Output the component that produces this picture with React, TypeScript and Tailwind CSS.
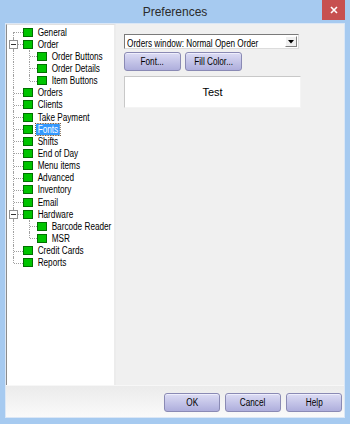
import React from "react";

type Node = {
  label: string;
  level: 0 | 1;
  expander?: boolean;
  first?: boolean;
  last?: boolean;
  lastChild?: boolean;
  selected?: boolean;
};

const nodes: Node[] = [
  { label: "General", level: 0, first: true },
  { label: "Order", level: 0, expander: true },
  { label: "Order Buttons", level: 1 },
  { label: "Order Details", level: 1 },
  { label: "Item Buttons", level: 1, lastChild: true },
  { label: "Orders", level: 0 },
  { label: "Clients", level: 0 },
  { label: "Take Payment", level: 0 },
  { label: "Fonts", level: 0, selected: true },
  { label: "Shifts", level: 0 },
  { label: "End of Day", level: 0 },
  { label: "Menu items", level: 0 },
  { label: "Advanced", level: 0 },
  { label: "Inventory", level: 0 },
  { label: "Email", level: 0 },
  { label: "Hardware", level: 0, expander: true },
  { label: "Barcode Reader", level: 1 },
  { label: "MSR", level: 1, lastChild: true },
  { label: "Credit Cards", level: 0 },
  { label: "Reports", level: 0, last: true },
];

// the dialog uses a condensed sans, approximated by squeezing Arial-width text
const squeeze = "inline-block scale-x-[0.82]";

// dotted connector lines for one row
const Connector = ({ node }: { node: Node }) => {
  const vTop = node.level === 0 && node.first ? "top-1/2" : "top-0";
  const vBottom = node.level === 0 && node.last ? "bottom-1/2" : "bottom-0";
  return (
    <>
      <div className="relative w-[16px] h-full shrink-0">
        <div className={`absolute left-[6px] ${vTop} ${vBottom} border-l border-dotted border-[#a0a0a0]`} />
        {node.level === 0 && (
          <div className="absolute left-[7px] right-0 top-1/2 border-t border-dotted border-[#a0a0a0]" />
        )}
        {node.expander && (
          <div className="absolute left-[2px] top-[2px] w-[9px] h-[9px] bg-white border border-[#919191] flex items-center justify-center">
            <div className="w-[5px] h-px bg-[#333]" />
          </div>
        )}
      </div>
      {node.level === 1 && (
        <div className="relative w-[14px] h-full shrink-0">
          <div
            className={`absolute left-[6px] top-0 ${node.lastChild ? "bottom-1/2" : "bottom-0"} border-l border-dotted border-[#a0a0a0]`}
          />
          <div className="absolute left-[7px] right-0 top-1/2 border-t border-dotted border-[#a0a0a0]" />
        </div>
      )}
    </>
  );
};

const TreeRow = ({ node }: { node: Node }) => (
  <div className="flex items-center h-[12.15px]">
    <Connector node={node} />
    <div className="w-[10px] h-[9px] shrink-0 bg-[#00c400] border border-[#007000]" />
    <span
      className={`${squeeze} origin-left ml-[3px] px-[2px] leading-[11px] whitespace-nowrap text-[10px] ${
        node.selected
          ? "bg-[#3399ff] text-white outline outline-1 outline-dotted outline-[#5a4020]"
          : "text-black"
      }`}
    >
      {node.label}
    </span>
  </div>
);

const LavButton = ({ label, w }: { label: string; w: string }) => (
  <button
    className={`${w} h-[19px] rounded-[3px] border border-[#8a8ab4] bg-gradient-to-b from-[#dcdcf4] to-[#aeaedc] text-[10px] text-black flex items-center justify-center shadow-[inset_0_1px_0_#eeeefc]`}
  >
    <span className={squeeze}>{label}</span>
  </button>
);

export default function App() {
  return (
    <div className="w-[350px] h-[424px] bg-[#a6caf0] flex flex-col font-['Liberation_Sans',sans-serif]">
      {/* title bar */}
      <div className="relative h-[23px] flex items-center justify-center shrink-0">
        <span className="text-[12px] text-[#2b2b2b] mt-[1px]">Preferences</span>
        <div className="absolute right-[5px] top-0 w-[23px] h-[20px] bg-[#c75050] flex items-center justify-center">
          <svg width="8" height="8" viewBox="0 0 8 8">
            <path d="M1 1 L7 7 M7 1 L1 7" stroke="white" strokeWidth="1.6" />
          </svg>
        </div>
      </div>

      {/* client area */}
      <div className="flex-1 mx-[5px] mb-[6px] border border-[#dbe7f6] bg-[#f0f0f0] flex flex-col">
        <div className="flex h-[361px] shrink-0">
          {/* tree */}
          <div className="w-[110px] shrink-0 bg-white border-l border-l-[#8c8c8c] border-t border-t-[#e0e0e0] border-r-2 border-r-[#ececec] pt-[1px] overflow-hidden">
            {nodes.map((n) => (
              <TreeRow key={n.label} node={n} />
            ))}
          </div>

          {/* settings panel */}
          <div className="flex-1 pl-[8px] pt-[10px] flex flex-col">
            <div className="w-[175px] h-[15px] bg-white border border-t-[#7a7a7a] border-l-[#7a7a7a] border-r-[#dcdcdc] border-b-[#dcdcdc] flex items-center">
              <div className="flex-1 overflow-hidden pl-[2px]">
                <span className={`${squeeze} origin-left text-[10px] leading-none text-black whitespace-nowrap`}>
                  Orders window: Normal Open Order
                </span>
              </div>
              <div className="w-[12px] h-[11px] mr-px shrink-0 bg-[#f0f0f0] border border-t-white border-l-white border-r-[#808080] border-b-[#808080] flex items-center justify-center">
                <svg width="6" height="4" viewBox="0 0 6 4">
                  <path d="M0 0 H6 L3 3.5 Z" fill="black" />
                </svg>
              </div>
            </div>

            <div className="flex gap-[4px] mt-[3px]">
              <LavButton label="Font..." w="w-[57px]" />
              <LavButton label="Fill Color..." w="w-[57px]" />
            </div>

            <div className="mt-[5px] w-[177px] h-[32px] bg-white border border-t-[#c8c8c8] border-l-[#c8c8c8] border-r-[#f4f4f4] border-b-[#f4f4f4] flex items-center justify-center">
              <span className="text-[11px] text-black">Test</span>
            </div>
          </div>
        </div>

        {/* bottom buttons */}
        <div className="flex-1 bg-gradient-to-b from-[#ebebeb] to-[#fafafa] border-t border-[#f7f7f7] flex justify-end items-start gap-[5px] pt-[7px] pr-[2px]">
          <LavButton label="OK" w="w-[56px]" />
          <LavButton label="Cancel" w="w-[56px]" />
          <LavButton label="Help" w="w-[56px]" />
        </div>
      </div>
    </div>
  );
}
